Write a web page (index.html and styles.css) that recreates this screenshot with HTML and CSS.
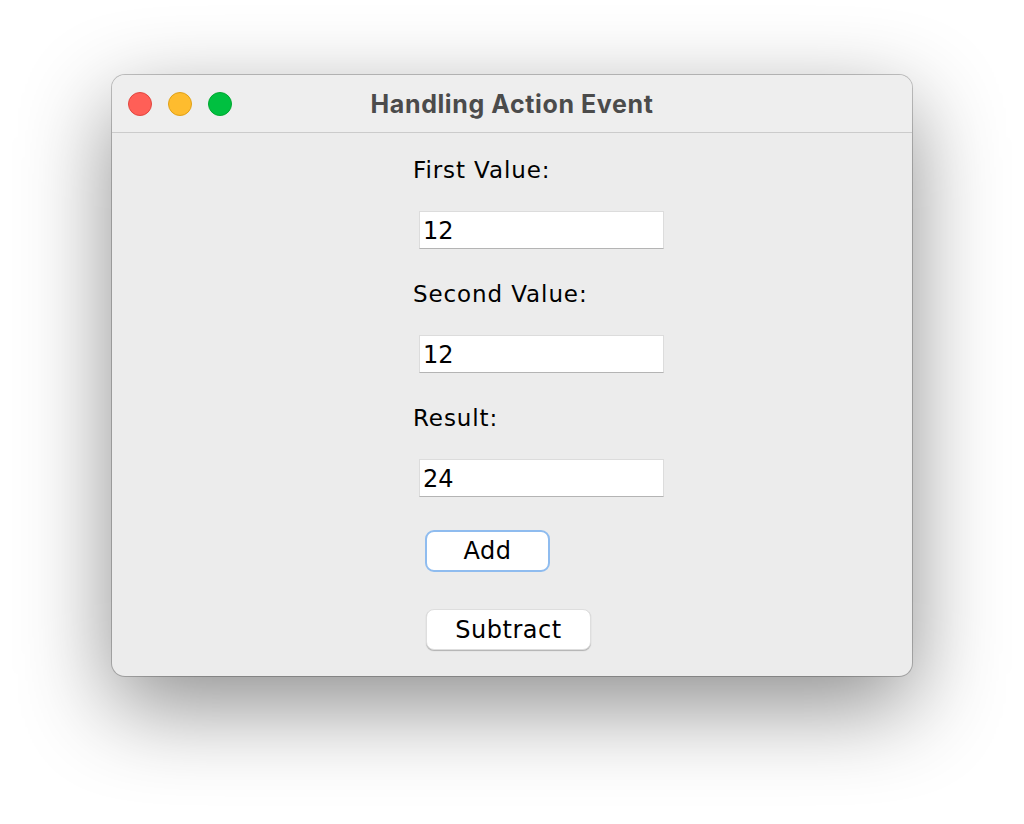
FILE: index.html
```html
<!DOCTYPE html>
<html>
<head>
<meta charset="utf-8">
<link rel="stylesheet" href="styles.css">
</head>
<body>
<div class="window">
  <div class="titlebar">
    <div class="lights">
      <span class="light red"></span>
      <span class="light yellow"></span>
      <span class="light green"></span>
    </div>
    <div class="title">Handling Action Event</div>
  </div>
  <div class="content">
    <div class="label first">First Value:</div>
    <div class="field">12</div>
    <div class="label">Second Value:</div>
    <div class="field">12</div>
    <div class="label">Result:</div>
    <div class="field">24</div>
    <div class="btn add">Add</div>
    <div class="btn subtract">Subtract</div>
  </div>
</div>
</body>
</html>
```
FILE: styles.css
```css
html, body {
  margin: 0;
  padding: 0;
  background: #ffffff;
}
body {
  width: 1024px;
  height: 824px;
  overflow: hidden;
  padding: 75px 0 0 112px;
  box-sizing: border-box;
}
.window {
  width: 800px;
  height: 601px;
  background: #ececec;
  border-radius: 13px;
  box-shadow: 0 0 0 1px rgba(0,0,0,0.22), 0 30px 90px rgba(0,0,0,0.45);
  overflow: hidden;
  display: flex;
  flex-direction: column;
}
.titlebar {
  height: 57px;
  flex: none;
  background: #eeeeee;
  border-bottom: 1px solid #cbcbcb;
  display: flex;
  align-items: center;
  position: relative;
}
.lights {
  display: flex;
  gap: 16px;
  padding-left: 16px;
  padding-top: 1px;
}
.light {
  width: 22px;
  height: 22px;
  border-radius: 50%;
  border: 1px solid;
}
.red { background: #ff5f57; border-color: #e2463f; }
.yellow { background: #febc2e; border-color: #e1a116; }
.green { background: #00c040; border-color: #00a82f; }
.title {
  position: absolute;
  left: 0;
  right: 0;
  top: 0;
  bottom: 0;
  display: flex;
  align-items: center;
  justify-content: center;
  font-family: Inter, "Liberation Sans", sans-serif;
  font-weight: 700;
  font-size: 25px;
  letter-spacing: 0.6px;
  color: #4b4b4b;
}
.content {
  display: flex;
  flex-direction: column;
  align-items: flex-start;
  padding-left: 301px;
  font-family: "DejaVu Sans", sans-serif;
  color: #000;
}
.label {
  height: 40px;
  line-height: 40px;
  font-size: 23px;
  letter-spacing: 0.9px;
  margin-top: 25px;
}
.label.first {
  margin-top: 17px;
}
.field {
  margin-top: 21px;
  margin-left: 6px;
  width: 245px;
  height: 38px;
  box-sizing: border-box;
  background: #fff;
  border: 1px solid #dcdcdc;
  border-bottom-color: #b4b4b4;
  padding-left: 3px;
  line-height: 38px;
  font-size: 24px;
}
.btn {
  box-sizing: border-box;
  background: #fff;
  display: flex;
  align-items: center;
  justify-content: center;
  font-size: 24px;
  letter-spacing: 0.5px;
}
.add {
  margin-top: 33px;
  margin-left: 12px;
  width: 125px;
  height: 42px;
  border-radius: 9px;
  border: 2px solid #8fbcef;
}
.subtract {
  margin-top: 37px;
  margin-left: 13px;
  width: 165px;
  height: 41px;
  border-radius: 8px;
  border: 1px solid #dedede;
  box-shadow: 0 1px 1px rgba(0,0,0,0.25);
}
```
